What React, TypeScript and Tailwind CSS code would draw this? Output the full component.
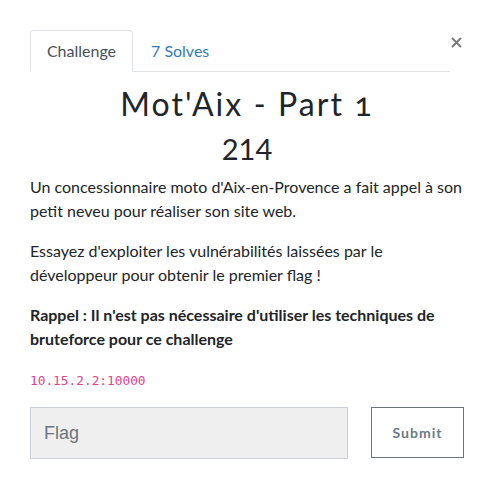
import React from "react";

export default function App() {
  return (
    <div className="relative w-[494px] h-[504px] bg-white font-['Lato',sans-serif] text-[#212529]">
      <button className="absolute left-[451px] top-[37px] w-[11px] h-[11px] flex items-center justify-center">
        <svg width="11" height="11" viewBox="0 0 11 11">
          <path d="M1 1L10 10M10 1L1 10" stroke="#7a7a7a" strokeWidth="2" />
        </svg>
      </button>
      <div className="pt-[30px] pl-[30px] pr-[44px]">
        <div className="flex border-b border-[#dee2e6] h-[42px]">
          <div className="w-[103px] h-[42px] border border-[#dee2e6] border-b-white rounded-t-[4px] bg-white flex items-center justify-center text-[16px] text-[#495057] -mb-px">
            Challenge
          </div>
          <div className="pl-[18px] flex items-center text-[16px] text-[#337ab7]">7 Solves</div>
        </div>
      </div>
      <div className="px-[30px]">
        <h2 className="text-center text-[32px] leading-[38px] mt-[13px] tracking-[2.1px] font-normal oldstyle-nums text-[#212529]">
          Mot'Aix - Part 1
        </h2>
        <h3 className="text-center text-[29px] leading-[34px] mt-[9px] font-normal text-[#212529]">214</h3>
        <div className="mt-[9px] text-[16px] leading-[24px]">
          <p className="mb-[16px]">
            Un concessionnaire moto d'Aix-en-Provence a fait appel à son petit neveu pour réaliser son site web.
          </p>
          <p className="mb-[16px]">
            Essayez d'exploiter les vulnérabilités laissées par le développeur pour obtenir le premier flag !
          </p>
          <p className="font-bold mb-[20px]">
            Rappel : Il n'est pas nécessaire d'utiliser les techniques de bruteforce pour ce challenge
          </p>
          <code className="block font-['DejaVu_Sans_Mono',monospace] text-[12.8px] leading-[20px] text-[#e83e8c]">
            10.15.2.2:10000
          </code>
        </div>
        <div className="flex items-start mt-[16px]">
          <div className="w-[318px] h-[52px] bg-[#efefef] border border-[#ccd1d9] flex items-center pl-[13px] font-['Liberation_Sans',sans-serif] text-[18px] text-[#6c757d]">
            Flag
          </div>
          <button className="ml-[23px] w-[93px] h-[51px] border border-[#6c757d] flex items-center justify-center text-[14px] font-bold tracking-[1px] text-[#6c7a8a]">
            Submit
          </button>
        </div>
      </div>
    </div>
  );
}
